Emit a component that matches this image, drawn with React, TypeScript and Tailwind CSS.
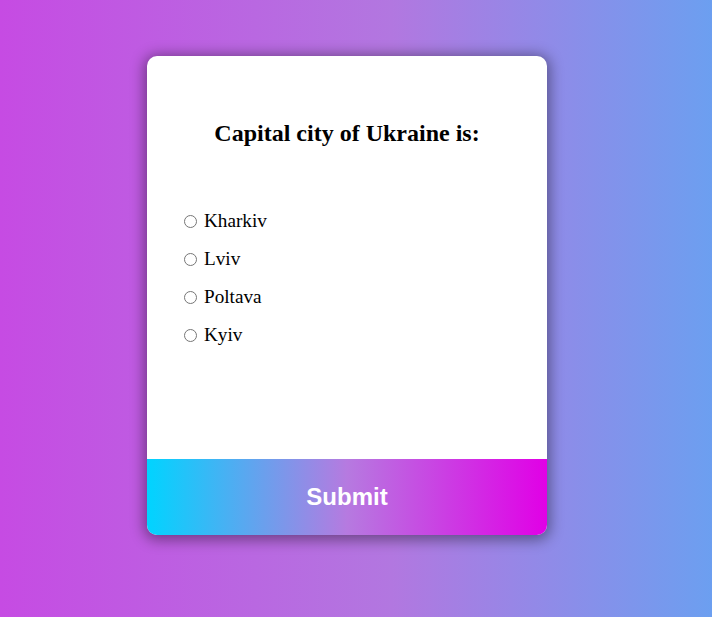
import React, { useState } from "react";

const options = ["Kharkiv", "Lviv", "Poltava", "Kyiv"];

const Quiz = () => {
  const [answer, setAnswer] = useState("");

  return (
    <div className="flex h-[479px] w-[400px] flex-col overflow-hidden rounded-[10px] bg-white shadow-[0_2px_14px_3px_rgba(0,0,0,0.4)]">
      <div className="flex-1 px-[37px] pt-[63px]">
        <h2 className="text-center text-[24px] font-bold leading-[28px] text-black">
          Capital city of Ukraine is:
        </h2>
        <ul className="mt-[55px] flex flex-col">
          {options.map((opt) => (
            <li key={opt} className="flex h-[38px] items-center">
              <input
                type="radio"
                name="answer"
                id={opt}
                checked={answer === opt}
                onChange={() => setAnswer(opt)}
                className="m-0 h-[13px] w-[13px]"
              />
              <label htmlFor={opt} className="ml-[7px] text-[19.2px] text-black">
                {opt}
              </label>
            </li>
          ))}
        </ul>
      </div>
      <button
        className="h-[76px] w-full bg-[linear-gradient(90deg,#00d4ff_0%,#b67ae0_50%,#e100e6_100%)] font-['Liberation_Sans',Arial,sans-serif] text-[24px] font-bold text-white"
        onClick={() => console.log(answer)}
      >
        Submit
      </button>
    </div>
  );
};

export default function App() {
  return (
    <div className="flex min-h-[617px] justify-center bg-[linear-gradient(90deg,#c64be3_0%,#b277e0_55%,#6c9ff0_100%)] pr-[18px] pt-[56px] font-['Liberation_Serif','Times_New_Roman',serif]">
      <Quiz />
    </div>
  );
}
